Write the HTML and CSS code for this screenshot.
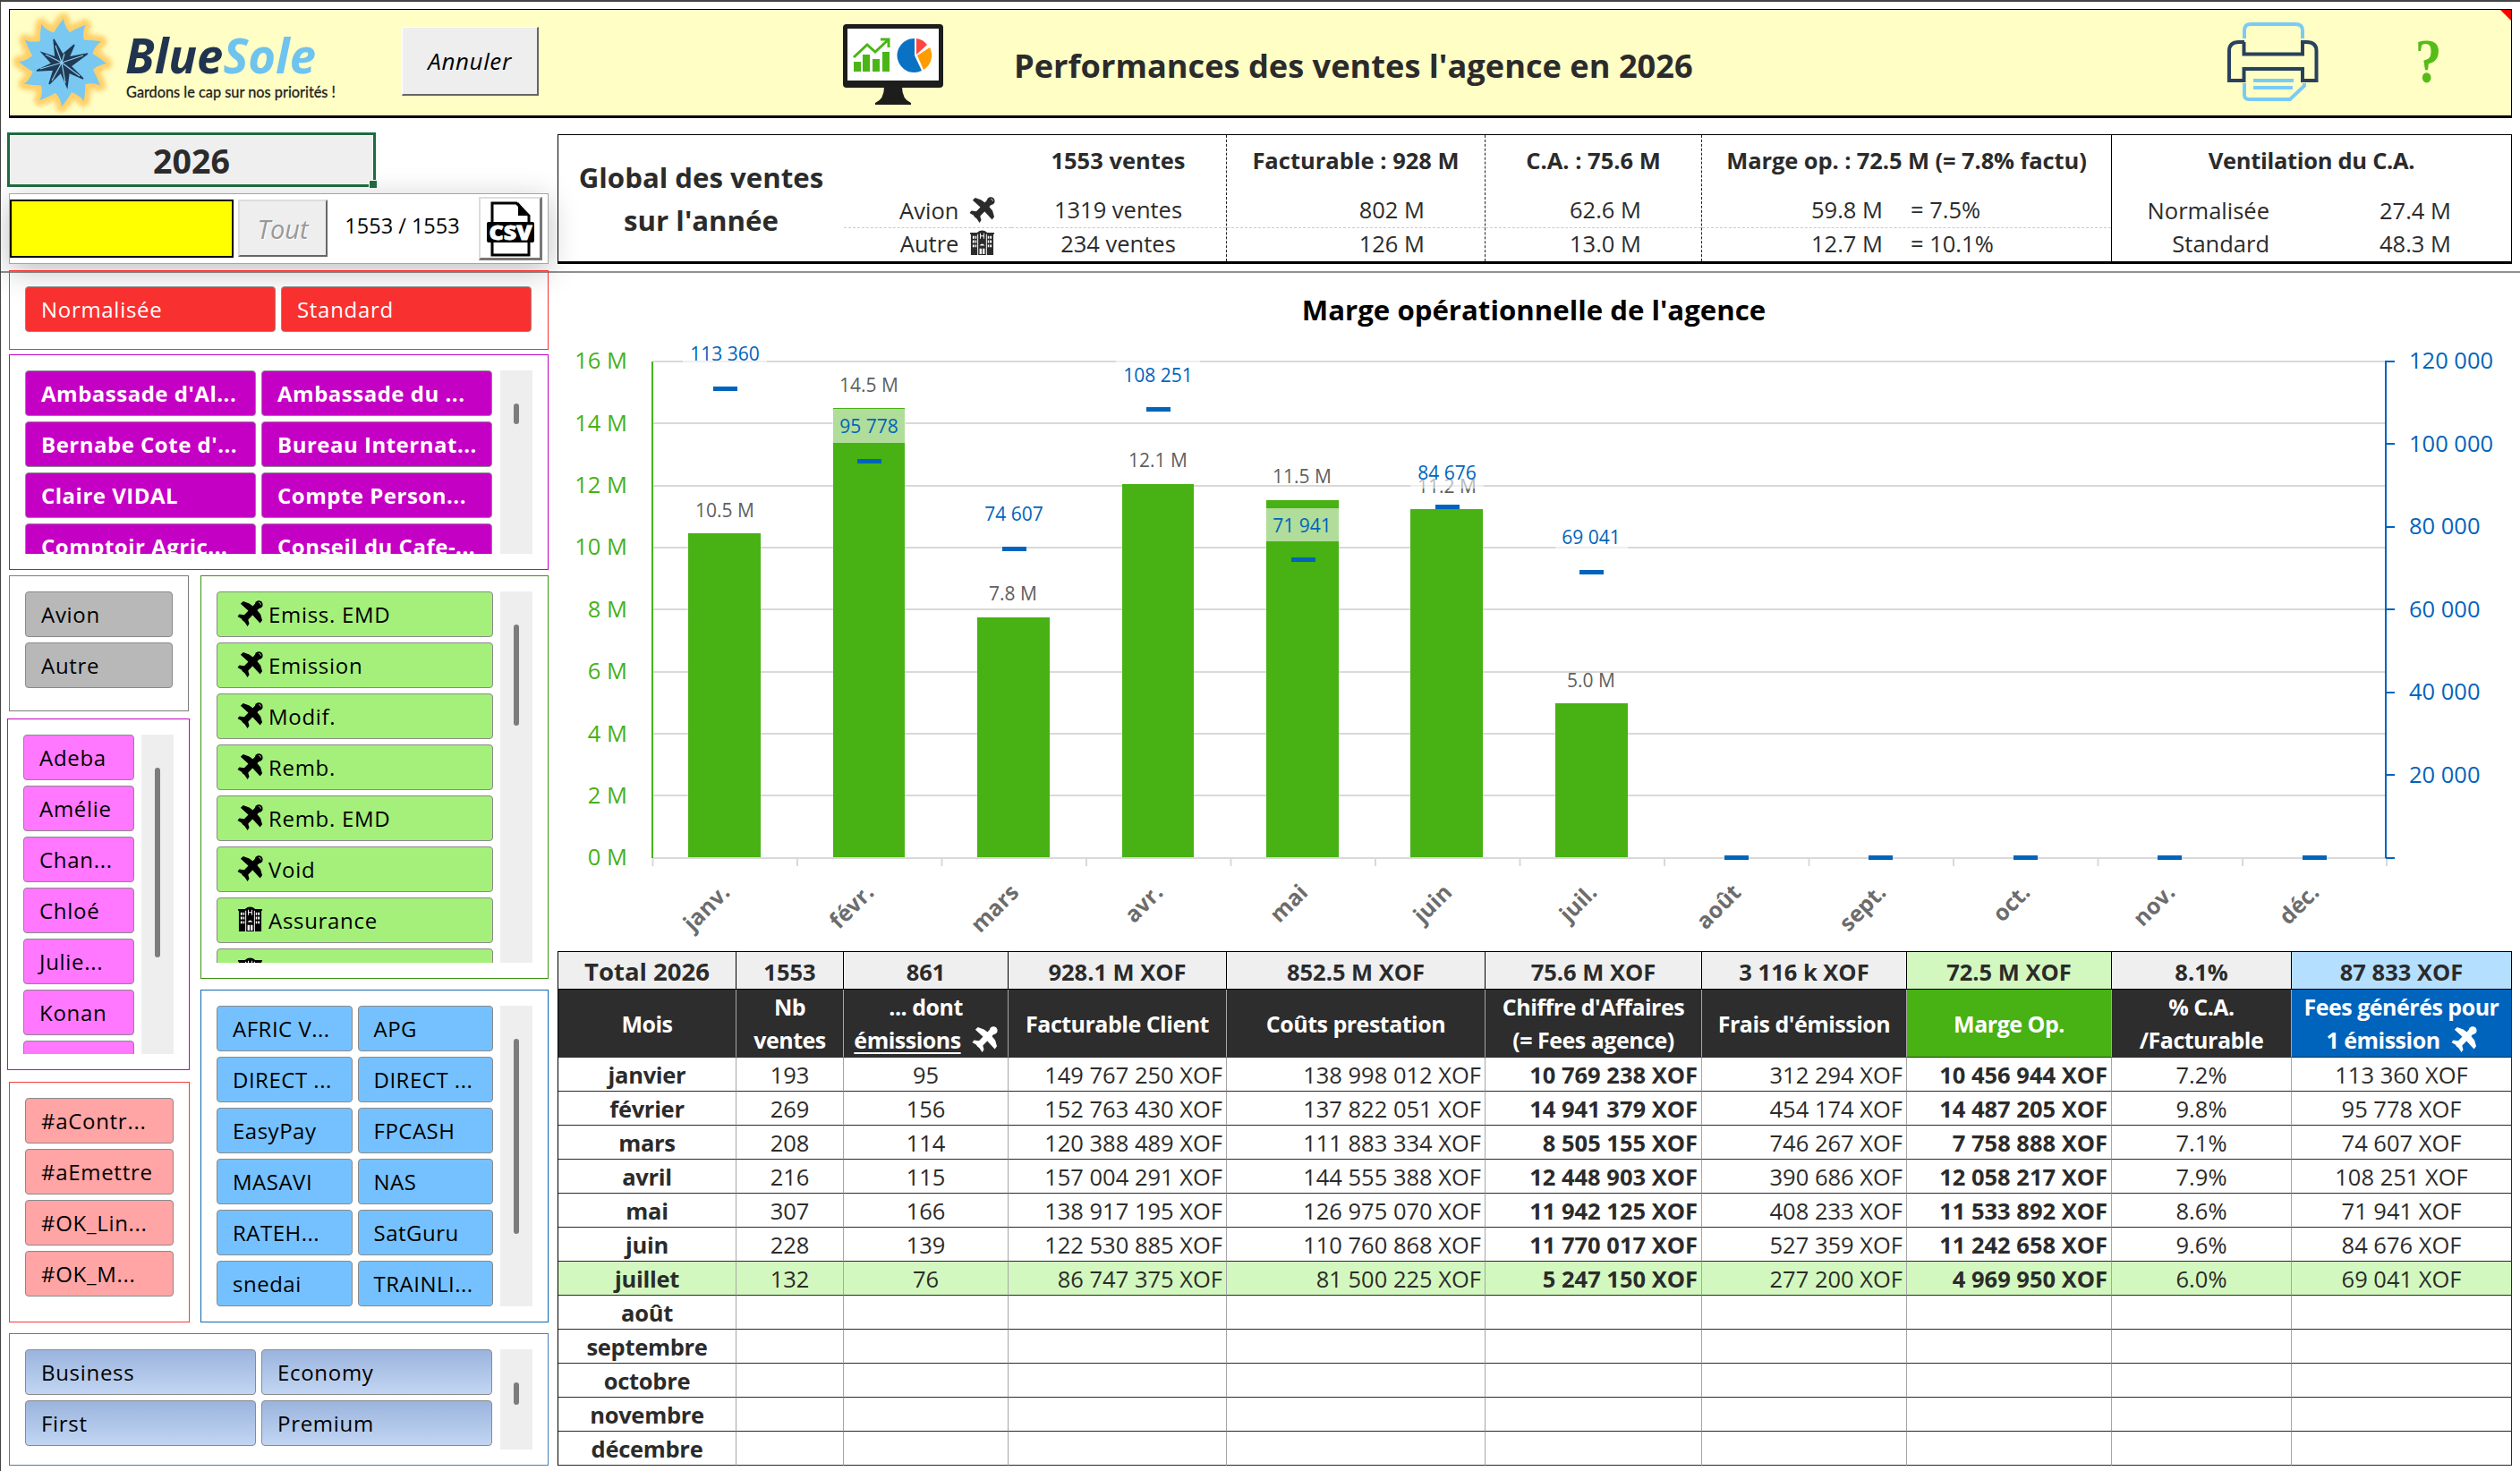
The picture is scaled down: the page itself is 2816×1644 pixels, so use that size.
FILE: index.html
```html
<!DOCTYPE html>
<html lang="fr">
<head>
  <meta charset="UTF-8" />
  <title>BlueSole - Performances des ventes</title>
  <link rel="stylesheet" href="styles.css">
</head>
<body>
  <svg class="defs" width="0" height="0">
    <symbol id="plane" viewBox="0 0 30 30">
      <path d="M24.500 5 9 21" stroke="currentColor" stroke-width="7" stroke-linecap="round" fill="none"/>
      <path fill="currentColor" d="M20 8 14 3.500 7 1 4 4 14 13zM22 10 27 16 29 23 26.500 26.500 17 16zM10 17 2.500 16 .500 18.500 8 23zM12 20 14 27 12 30 6.500 22z"/>
      <circle cx="25" cy="4.800" r="4.600" fill="currentColor"/>
      <path class="win-line" d="M25 2.500a2.500 2.500 0 0 1 2.500 2.500"/>
    </symbol>
    <symbol id="hotel" viewBox="0 0 30 30">
      <path fill="currentColor" d="M1 3h8Q15-2 21 3h8v2h-1v24H2V5H1z"/>
      <path class="win" d="M4 7h2v3H4zM7 7h1.500v3H7zM4 12h2v3H4zM7 12h1.500v3H7zM4 17h2v3H4zM7 17h1.500v3H7zM21.500 7H23v3h-1.500zM24 7h2v3h-2zM21.500 12H23v3h-1.500zM24 12h2v3h-2zM21.500 17H23v3h-1.500zM24 17h2v3h-2zM9.500 5h1v24h-1zM19.500 5h1v24h-1zM12.500 4h1v6h-1zM16.500 4h1v6h-1zM13.500 6.500h3v1h-3zM12 18Q15 14 18 18zM12 21.500h2.500V28H12zM15.500 21.500H18V28h-2.500z"/>
    </symbol>
  </svg>

  <header class="banner">
    <svg class="logo" width="370" height="118" viewBox="11 11 370 118">
      <defs>
        <filter id="glow" x="-30%" y="-30%" width="160%" height="160%"><feGaussianBlur stdDeviation="2.500"/></filter>
        <path id="ray" d="M-13-28Q-8-38 1-49Q2-38 13-29L8-20H-8z"/>
        <g id="sun">
          <circle r="32"/>
          <use href="#ray"/><use href="#ray" transform="rotate(30)"/><use href="#ray" transform="rotate(60)"/><use href="#ray" transform="rotate(90)"/>
          <use href="#ray" transform="rotate(120)"/><use href="#ray" transform="rotate(150)"/><use href="#ray" transform="rotate(180)"/><use href="#ray" transform="rotate(210)"/>
          <use href="#ray" transform="rotate(240)"/><use href="#ray" transform="rotate(270)"/><use href="#ray" transform="rotate(300)"/><use href="#ray" transform="rotate(330)"/>
        </g>
      </defs>
      <use href="#sun" transform="translate(70 70)" fill="#ffd06a" stroke="#ffd06a" stroke-width="13" stroke-linejoin="round" filter="url(#glow)"/>
      <use href="#sun" transform="translate(70 70)" fill="#78c8f2"/>
      <g transform="translate(69 70)" stroke="#203a55" stroke-width="1.500">
        <path fill="#203a55" d="M-9-26 1-9 14-20 8-6 29-10 10 4 24 18 8 11 6 27-1 11-14 24-9 8-28 9-11 1-22-11-7-6z"/>
        <path d="M0 0-7-19M0 0 3-10M0 0 24-8M0 0 20 15M0 0 4 23M0 0-11 20M0 0-24 7M0 0-18-9" stroke="#8fd0f2" stroke-width="1.200"/>
      </g>
      <text x="140" y="82" class="brand" textLength="213" lengthAdjust="spacingAndGlyphs">Blue<tspan class="brand-light">Sole</tspan></text>
      <text x="141" y="109" class="tagline" textLength="234" lengthAdjust="spacingAndGlyphs">Gardons le cap sur nos priorités !</text>
    </svg>
    <button class="btn-cancel">Annuler</button>
    <svg class="monitor" width="112" height="90" viewBox="0 0 112 90">
      <rect width="112" height="71" rx="4" fill="#1d1d1b"/>
      <rect x="5" y="5" width="102" height="58" fill="#fff"/>
      <path fill="#1d1d1b" d="M46 70h20q0 14 10 18v2H36v-2q10-4 10-18z"/>
      <path fill="#4ab616" d="M12 42h8v11h-8zM22 34h8v19h-8zM33 39h8v14h-8zM44 31h8v22h-8z"/>
      <path d="M12 37 27 23 36 31 50 18M42 17h9v9" fill="none" stroke="#4ab616" stroke-width="3"/>
      <path fill="#0a72c4" d="M80 16v19l8 17A19 19 0 1 1 80 16z"/>
      <path fill="#ff453f" d="M82 16a18 18 0 0 1 12 7L82 34z"/>
      <path fill="#ff9d00" d="M97 26a19 19 0 0 1-7 25L83 35z"/>
    </svg>
    <h1>Performances des ventes l'agence en 2026</h1>
    <svg class="printer" width="102" height="90" viewBox="0 0 102 90" fill="none">
      <path d="M19 19V10q0-7 7-7H76q8 0 8 7V19" stroke="#7acbf4" stroke-width="4"/>
      <path d="M19 23H13q-11 0-11 10V66H18.500V53H84V66H99.500V33q0-10-11-10H84V36.500H18.500V23" stroke="#29415c" stroke-width="4"/>
      <path d="M19 69V82q0 5 5 5H70L86 72V69M29 66H74M29 74H73" stroke="#7acbf4" stroke-width="4"/>
    </svg>
    <span class="help">?</span>
    <i class="note"></i>
  </header>

  <div class="top">
    <div class="top-left">
      <div class="year">2026<i></i></div>
      <div class="toolbar">
        <div class="search"></div>
        <button class="btn-all" disabled>Tout</button>
        <span class="count">1553 / 1553</span>
        <button class="btn-csv">
          <svg width="53" height="62" viewBox="0 0 53 62">
            <path d="M6 2H33L47 16V60H6z" fill="#fff" stroke="#000" stroke-width="3"/>
            <path d="M35 1V16H48z"/>
            <rect x="0" y="23" width="53" height="23" rx="2"/>
            <text x="26.500" y="43" class="csv" textLength="48" lengthAdjust="spacingAndGlyphs">CSV</text>
          </svg>
        </button>
      </div>
    </div>
    <div class="summary">
      <div class="s-title">Global des ventes<br>sur l'année</div>
      <div class="s-kind">
        <div></div>
        <div>Avion <svg class="ico"><use href="#plane"/></svg></div>
        <div>Autre <svg class="ico ico-hotel"><use href="#hotel"/></svg></div>
      </div>
      <div class="s-count"><b>1553 ventes</b><div>1319 ventes</div><div>234 ventes</div></div>
      <div class="s-fact"><b>Facturable : 928 M</b><div>802 M</div><div>126 M</div></div>
      <div class="s-ca"><b>C.A. : 75.6 M</b><div>62.6 M</div><div>13.0 M</div></div>
      <div class="s-marge"><b>Marge op. : 72.5 M (= 7.8% factu)</b><div><span>59.8 M</span><span>= 7.5%</span></div><div><span>12.7 M</span><span>= 10.1%</span></div></div>
      <div class="s-vent"><b>Ventilation du C.A.</b><div><span>Normalisée</span><span>27.4 M</span></div><div><span>Standard</span><span>48.3 M</span></div></div>
    </div>
  </div>

  <div class="bottom">
    <aside class="sidebar">
      <div class="slicer red">
        <div class="list two"><span>Normalisée</span><span>Standard</span></div>
      </div>
      <div class="slicer purple">
        <div class="list two">
          <span>Ambassade d'Al...</span><span>Ambassade du ...</span>
          <span>Bernabe Cote d'...</span><span>Bureau Internat...</span>
          <span>Claire VIDAL</span><span>Compte Person...</span>
          <span>Comptoir Agric...</span><span>Conseil du Cafe-...</span>
        </div>
        <div class="scroll"><i></i></div>
      </div>
      <div class="cols">
        <div class="col-a">
          <div class="slicer gray">
            <div class="list"><span>Avion</span><span>Autre</span></div>
          </div>
          <div class="slicer pink">
            <div class="list"><span>Adeba</span><span>Amélie</span><span>Chan...</span><span>Chloé</span><span>Julie...</span><span>Konan</span><span></span></div>
            <div class="scroll"><i></i></div>
          </div>
          <div class="slicer salmon">
            <div class="list"><span>#aContr...</span><span>#aEmettre</span><span>#OK_Lin...</span><span>#OK_M...</span></div>
          </div>
        </div>
        <div class="col-b">
          <div class="slicer green">
            <div class="list">
              <span><svg class="ico"><use href="#plane"/></svg>Emiss. EMD</span>
              <span><svg class="ico"><use href="#plane"/></svg>Emission</span>
              <span><svg class="ico"><use href="#plane"/></svg>Modif.</span>
              <span><svg class="ico"><use href="#plane"/></svg>Remb.</span>
              <span><svg class="ico"><use href="#plane"/></svg>Remb. EMD</span>
              <span><svg class="ico"><use href="#plane"/></svg>Void</span>
              <span><svg class="ico ico-hotel"><use href="#hotel"/></svg>Assurance</span>
              <span><svg class="ico ico-hotel"><use href="#hotel"/></svg></span>
            </div>
            <div class="scroll"><i></i></div>
          </div>
          <div class="slicer blue">
            <div class="list two">
              <span>AFRIC V...</span><span>APG</span>
              <span>DIRECT ...</span><span>DIRECT ...</span>
              <span>EasyPay</span><span>FPCASH</span>
              <span>MASAVI</span><span>NAS</span>
              <span>RATEH...</span><span>SatGuru</span>
              <span>snedai</span><span>TRAINLI...</span>
            </div>
            <div class="scroll"><i></i></div>
          </div>
        </div>
      </div>
      <div class="slicer cabin">
        <div class="list two"><span>Business</span><span>Economy</span><span>First</span><span>Premium</span></div>
        <div class="scroll"><i></i></div>
      </div>
    </aside>

    <main>
      <svg class="chart" width="2184" height="758" viewBox="623 305 2184 758">
        <text x="1714" y="358" class="chart-title">Marge opérationnelle de l'agence</text>
        <path class="grid" d="M730 404H2666M730 473H2666M730 543H2666M730 612H2666M730 681H2666M730 751H2666M730 820H2666M730 889H2666"/>
        <g class="bars">
          <rect x="769" y="596" width="81" height="362"/>
          <rect x="931" y="456" width="80" height="502"/>
          <rect x="1092" y="690" width="81" height="268"/>
          <rect x="1254" y="541" width="80" height="417"/>
          <rect x="1415" y="559" width="81" height="399"/>
          <rect x="1576" y="569" width="81" height="389"/>
          <rect x="1738" y="786" width="81" height="172"/>
        </g>
        <path class="axis" d="M729 959H2667M729.500 959v9M891 959v9M1052.500 959v9M1214 959v9M1375.500 959v9M1537 959v9M1698.500 959v9M1860 959v9M2021.500 959v9M2183 959v9M2344.500 959v9M2506 959v9M2667 959v9"/>
        <path class="axis-left" d="M729 404V959"/>
        <path class="axis-right" d="M2666 403V959M2666 404h10M2666 496h10M2666 589h10M2666 681h10M2666 774h10M2666 866h10M2666 959h10"/>
        <g class="val">
          <text x="810" y="578">10.5 M</text>
          <text x="971" y="438">14.5 M</text>
          <text x="1132" y="671">7.8 M</text>
          <text x="1294" y="522">12.1 M</text>
          <text x="1455" y="540">11.5 M</text>
          <text x="1617" y="551">11.2 M</text>
          <text x="1778" y="768">5.0 M</text>
        </g>
        <g class="halo">
          <rect x="763" y="377" width="94" height="37"/>
          <rect x="930" y="457" width="82" height="38"/>
          <rect x="1092" y="555" width="82" height="38"/>
          <rect x="1247" y="401" width="94" height="37"/>
          <rect x="1415" y="568" width="81" height="37"/>
          <rect x="1576" y="509" width="82" height="37"/>
          <rect x="1738" y="581" width="81" height="37"/>
        </g>
        <g class="fee">
          <text x="810" y="403">113 360</text>
          <text x="971" y="484">95 778</text>
          <text x="1133" y="582">74 607</text>
          <text x="1294" y="427">108 251</text>
          <text x="1455" y="595">71 941</text>
          <text x="1617" y="536">84 676</text>
          <text x="1778" y="608">69 041</text>
        </g>
        <path class="mark" d="M797 434.500h27M958 515.500h27M1120 613.500h27M1281 457.500h27M1443 625.500h27M1604 566.500h27M1765 639.500h27M1927 958.500h27M2088 958.500h27M2250 958.500h27M2411 958.500h27M2573 958.500h27"/>
        <g class="lab-left">
          <text x="701" y="412">16 M</text><text x="701" y="482">14 M</text><text x="701" y="551">12 M</text>
          <text x="701" y="620">10 M</text><text x="701" y="690">8 M</text><text x="701" y="759">6 M</text>
          <text x="701" y="829">4 M</text><text x="701" y="898">2 M</text><text x="701" y="967">0 M</text>
        </g>
        <g class="lab-right">
          <text x="2692" y="412">120 000</text><text x="2692" y="505">100 000</text><text x="2692" y="597">80 000</text>
          <text x="2692" y="690">60 000</text><text x="2692" y="782">40 000</text><text x="2692" y="875">20 000</text>
        </g>
        <g class="months">
          <text transform="translate(817 999) rotate(-45)">janv.</text>
          <text transform="translate(978 999) rotate(-45)">févr.</text>
          <text transform="translate(1140 999) rotate(-45)">mars</text>
          <text transform="translate(1301 999) rotate(-45)">avr.</text>
          <text transform="translate(1463 999) rotate(-45)">mai</text>
          <text transform="translate(1624 999) rotate(-45)">juin</text>
          <text transform="translate(1786 999) rotate(-45)">juil.</text>
          <text transform="translate(1947 999) rotate(-45)">août</text>
          <text transform="translate(2109 999) rotate(-45)">sept.</text>
          <text transform="translate(2270 999) rotate(-45)">oct.</text>
          <text transform="translate(2432 999) rotate(-45)">nov.</text>
          <text transform="translate(2593 999) rotate(-45)">déc.</text>
        </g>
      </svg>

      <table>
        <colgroup><col class="c1"><col class="c2"><col class="c3"><col class="c4"><col class="c5"><col class="c6"><col class="c7"><col class="c8"><col class="c9"><col class="c10"></colgroup>
        <tr class="total"><th>Total 2026</th><th>1553</th><th>861</th><th>928.1 M XOF</th><th>852.5 M XOF</th><th>75.6 M XOF</th><th>3 116 k XOF</th><th class="t-green">72.5 M XOF</th><th>8.1%</th><th class="t-blue">87 833 XOF</th></tr>
        <tr class="head"><th>Mois</th><th>Nb<br>ventes</th><th>... dont<br><u>émissions</u> <svg class="ico"><use href="#plane"/></svg></th><th>Facturable Client</th><th>Coûts prestation</th><th>Chiffre d'Affaires<br>(= Fees agence)</th><th>Frais d'émission</th><th class="h-green">Marge Op.</th><th>% C.A.<br>/Facturable</th><th class="h-blue">Fees générés pour<br>1 émission <svg class="ico"><use href="#plane"/></svg></th></tr>
        <tr><td>janvier</td><td>193</td><td>95</td><td>149 767 250 XOF</td><td>138 998 012 XOF</td><td>10 769 238 XOF</td><td>312 294 XOF</td><td>10 456 944 XOF</td><td>7.2%</td><td>113 360 XOF</td></tr>
        <tr><td>février</td><td>269</td><td>156</td><td>152 763 430 XOF</td><td>137 822 051 XOF</td><td>14 941 379 XOF</td><td>454 174 XOF</td><td>14 487 205 XOF</td><td>9.8%</td><td>95 778 XOF</td></tr>
        <tr><td>mars</td><td>208</td><td>114</td><td>120 388 489 XOF</td><td>111 883 334 XOF</td><td>8 505 155 XOF</td><td>746 267 XOF</td><td>7 758 888 XOF</td><td>7.1%</td><td>74 607 XOF</td></tr>
        <tr><td>avril</td><td>216</td><td>115</td><td>157 004 291 XOF</td><td>144 555 388 XOF</td><td>12 448 903 XOF</td><td>390 686 XOF</td><td>12 058 217 XOF</td><td>7.9%</td><td>108 251 XOF</td></tr>
        <tr><td>mai</td><td>307</td><td>166</td><td>138 917 195 XOF</td><td>126 975 070 XOF</td><td>11 942 125 XOF</td><td>408 233 XOF</td><td>11 533 892 XOF</td><td>8.6%</td><td>71 941 XOF</td></tr>
        <tr><td>juin</td><td>228</td><td>139</td><td>122 530 885 XOF</td><td>110 760 868 XOF</td><td>11 770 017 XOF</td><td>527 359 XOF</td><td>11 242 658 XOF</td><td>9.6%</td><td>84 676 XOF</td></tr>
        <tr class="current"><td>juillet</td><td>132</td><td>76</td><td>86 747 375 XOF</td><td>81 500 225 XOF</td><td>5 247 150 XOF</td><td>277 200 XOF</td><td>4 969 950 XOF</td><td>6.0%</td><td>69 041 XOF</td></tr>
        <tr><td>août</td><td></td><td></td><td></td><td></td><td></td><td></td><td></td><td></td><td></td></tr>
        <tr><td>septembre</td><td></td><td></td><td></td><td></td><td></td><td></td><td></td><td></td><td></td></tr>
        <tr><td>octobre</td><td></td><td></td><td></td><td></td><td></td><td></td><td></td><td></td><td></td></tr>
        <tr><td>novembre</td><td></td><td></td><td></td><td></td><td></td><td></td><td></td><td></td><td></td></tr>
        <tr><td>décembre</td><td></td><td></td><td></td><td></td><td></td><td></td><td></td><td></td><td></td></tr>
      </table>
    </main>
  </div>
</body>
</html>
```
FILE: styles.css
```css
* { box-sizing: border-box; }
body { margin: 0; width: 2816px; height: 1644px; overflow: hidden; background: #fff; border-top: 2px solid #444; border-left: 1px solid #444; font-family: "Open Sans", "Noto Sans", sans-serif; font-size: 25.5px; color: #2b2b2b; }
button { font-family: inherit; padding: 0; }
.defs { position: absolute; }
.ico { width: 29px; height: 29px; vertical-align: -4px; }
.win { fill: #fff; }
.win-line { fill: none; stroke: #fff; opacity: .7; }

/* banner */
.banner { position: relative; display: flex; align-items: flex-start; margin: 8px 9px 0; height: 122px; background: #fffec5; border: 1px solid #000; border-bottom-width: 3px; }
.logo { flex: none; overflow: visible; }
.brand { font-size: 53px; font-weight: bold; font-style: italic; fill: #203450; }
.brand-light { fill: #6fc3ef; }
.tagline { font-family: Lato, sans-serif; font-size: 17px; fill: #1c1c1c; stroke: #1c1c1c; stroke-width: .3px; }
.btn-cancel { width: 153px; height: 77px; margin: 19px 0 0 68px; background: #eee; border: 1px solid #fff; border-right: 2px solid #666; border-bottom: 2px solid #666; font-size: 26px; letter-spacing: .6px; font-style: italic; color: #000; }
.monitor { margin: 16px 0 0 340px; }
h1 { margin: 38px 0 0 79px; width: 761px; font-size: 36.200px; line-height: 48px; white-space: nowrap; }
.printer { margin: 13px 0 0 595px; }
.help { margin: 22px 0 0 105px; font: bold 70px/72px "Liberation Serif", serif; color: #55bb17; transform: scaleX(.85); }
.note { position: absolute; top: 0; right: 0; border-top: 12px solid #f00; border-left: 12px solid transparent; }

.top { display: flex; height: 173px; padding: 16px 9px 0 7px; border-bottom: 2px solid #909090; }
.top-left { width: 605px; margin-right: 10px; }
.year { position: relative; width: 412px; height: 61px; border: 3px solid #1e6b3e; background: #efefef; box-shadow: inset 0 0 0 1px #fff; text-align: center; font-size: 37.500px; font-weight: bold; line-height: 58px; }
.year i { position: absolute; right: -4px; bottom: -4px; width: 9px; height: 9px; background: #1e6b3e; border: 1px solid #fff; border-width: 1px 0 0 1px; }
.toolbar { display: flex; margin: 7px 0 0 2px; width: 603px; height: 79px; background: #fff; border: 1px solid #a6a6a6; box-shadow: 0 8px 34px rgba(0,0,0,.25); }
.search { width: 250px; height: 65px; margin-top: 6px; background: #ff0; border: 2px solid #000; }
.btn-all { width: 100px; height: 64px; margin: 6px 0 0 5px; background: #eee; border: 2px solid #ddd; border-right: 2px solid #666; border-bottom: 2px solid #666; font-size: 29px; font-style: italic; color: #999; text-shadow: 1px 1px #fff; }
.count { width: 167px; text-align: center; line-height: 71px; color: #000; font-size: 23.500px; }
.btn-csv { width: 71px; height: 71px; margin: 3px 0 0 2px; background: #fff; border: 2px solid #ddd; border-right: 3px solid #777; border-bottom: 3px solid #777; }
.btn-csv svg { display: block; margin: 2px auto 0; }
.csv { font-size: 23px; font-weight: 800; fill: #fff; text-anchor: middle; stroke: #fff; stroke-width: .8px; }

/* yearly summary */
.summary { flex: 1; display: flex; height: 145px; margin-top: 2px; border: 1px solid #000; border-bottom-width: 3px; }
.summary > div { display: grid; grid-template-rows: 60px 44px 37px; line-height: 39px; white-space: nowrap; }
.summary > div > * { align-self: end; }
.summary b { align-self: center; text-align: center; padding-bottom: 4px; }
.summary .s-title { display: block; width: 319px; padding-top: 23px; padding-right: 0; text-align: center; font-size: 31.200px; font-weight: bold; line-height: 48px; }
.s-kind { width: 187px; }
.s-kind > div { text-align: right; padding-right: 18px; height: 39px; }
.s-kind .ico { margin-left: 5px; }
.s-count { width: 241px; text-align: center; border-right: 1px dashed #222; }
.s-kind > div:nth-child(2), .s-count > div:nth-child(2), .s-fact > div:nth-child(2), .s-ca > div:nth-child(2), .s-marge > div:nth-child(2) { border-bottom: 1px dashed #ccc; }
.s-count > * { padding-left: 5px; padding-right: 6px; }
.s-fact { width: 289px; border-right: 1px dashed #222; }
.s-fact > div { text-align: right; padding-right: 67px; }
.s-ca { width: 242px; border-right: 1px dashed #222; }
.s-ca > div { text-align: right; padding-right: 67px; }
.s-marge { width: 458px; border-right: 1px solid #000; }
.s-marge b { letter-spacing: -.1px; }
.s-marge > div { display: grid; grid-template-columns: 202px 1fr; column-gap: 31px; }
.s-marge span:first-child, .s-vent span { text-align: right; }
.s-vent { flex: 1; }
.s-vent b { letter-spacing: -.3px; }
.s-vent > div { display: grid; grid-template-columns: 176px 203px; }

/* slicers */
.bottom { display: flex; }
.sidebar { width: 612px; padding-left: 9px; margin-top: -3px; }
.slicer { display: flex; gap: 9px; padding: 17px; border: 1px solid; }
.list { flex: 1; display: grid; grid-auto-rows: 51px; gap: 6px; overflow: hidden; align-content: start; min-width: 0; }
.two { grid-template-columns: 1fr 1fr; }
.list span { border: 1px solid #8a8a8a; border-radius: 4px; padding-left: 17px; line-height: 50px; font-size: 24px; letter-spacing: .7px; color: #000; white-space: nowrap; overflow: hidden; }
.scroll { width: 36px; background: #eee; padding-top: 37px; }
.scroll i { display: block; width: 6px; margin: 0 auto; border-radius: 3px; background: #7c7c7c; }
.cols { display: flex; margin-top: 6px; }
.col-a { width: 214px; }
.col-b { width: 389px; }
.red { height: 89px; padding-right: 18px; border-color: #f93030; }
.red span { background: #f93030; color: #fff; }
.purple { height: 241px; margin-top: 5px; border-color: #c500c5; }
.purple span { background: #c500c5; color: #fff; font-weight: bold; letter-spacing: .5px; }
.purple i { height: 23px; }
.gray { width: 201px; height: 152px; border-color: #7c7c7c; }
.gray span { background: #b8b8b8; }
.pink { width: 204px; height: 393px; margin: 8px 0 0 -2px; gap: 8px; border-color: #c500c5; }
.pink span { background: #ff78ff; }
.pink i { height: 212px; }
.salmon { width: 202px; height: 269px; margin-top: 13px; border-color: #f03c3c; }
.salmon span { background: #ffa5a5; }
.green { height: 451px; gap: 8px; border-color: #3d9410; }
.green span { background: #a4f07b; }
.green .ico { margin: 0 6px 0 5px; }
.green .win { fill: #a4f07b; }
.green i { height: 113px; }
.blue { height: 372px; margin-top: 12px; gap: 8px; border-color: #0e67b0; }
.blue span { background: #75c1ff; letter-spacing: .5px; }
.blue i { height: 218px; }
.cabin { height: 148px; margin-top: 12px; border-color: #4a7ebb; }
.cabin span { background: linear-gradient(#9bb4dd, #c2d6f3); }
.cabin i { height: 25px; }

/* chart */
main { margin-left: 10px; }
.chart { display: block; }
.chart-title { font-size: 31.200px; font-weight: bold; text-anchor: middle; fill: #000; }
.grid, .axis { stroke: #d9d9d9; stroke-width: 2; fill: none; }
.bars { fill: #48b114; }
.axis-left { stroke: #48b114; stroke-width: 2; }
.axis-right { stroke: #0064bc; stroke-width: 2; fill: none; }
.val { font-size: 21px; fill: #606060; text-anchor: middle; }
.fee { font-size: 21px; fill: #0064bc; text-anchor: middle; }
.halo { fill: #fff; opacity: .57; }
.mark { stroke: #0064bc; stroke-width: 5; }
.lab-left { font-size: 25.500px; fill: #48b114; text-anchor: end; }
.lab-right { font-size: 25.500px; fill: #0064bc; }
.months { font-size: 25px; font-weight: bold; fill: #6c6c6c; text-anchor: end; }

/* monthly table */
table { table-layout: fixed; width: 2184px; border-spacing: 0; border-top: 1px solid #000; border-left: 1px solid #000; }
.c1 { width: 199px; } .c2 { width: 120px; } .c3 { width: 184px; } .c4 { width: 244px; } .c5 { width: 289px; }
.c6 { width: 242px; } .c7 { width: 229px; } .c8 { width: 229px; } .c9 { width: 201px; } .c10 { width: 246px; }
td, th { height: 38px; padding: 1px 4px 0; border-right: 1px solid #a6a6a6; border-bottom: 1px solid #2b2b2b; text-align: center; line-height: 36px; white-space: nowrap; }
td:nth-child(n+4):nth-child(-n+8) { text-align: right; }
td:first-child, td:nth-child(6), td:nth-child(8) { font-weight: bold; }
td:first-child { letter-spacing: -.3px; }
td:last-child, th:last-child { border-right-color: #2b2b2b; }
.total th { height: 42px; padding-top: 3px; background: #efefef; border-color: #000; }
.total th:first-child { font-size: 27.500px; }
.total .t-green { background: #d3f8bf; }
.total .t-blue { background: #b5dfff; }
.head th { height: 76px; padding: 1px 0 0; background: #2d2d2d; color: #fff; font-size: 25px; letter-spacing: -.5px; line-height: 37px; }
.head .ico { margin-left: 6px; }
.head .h-green { background: #48b114; }
.head .h-blue { background: #0064bc; }
.head u { text-underline-offset: 4px; }
.current td { background: #d3f8bf; }
```
